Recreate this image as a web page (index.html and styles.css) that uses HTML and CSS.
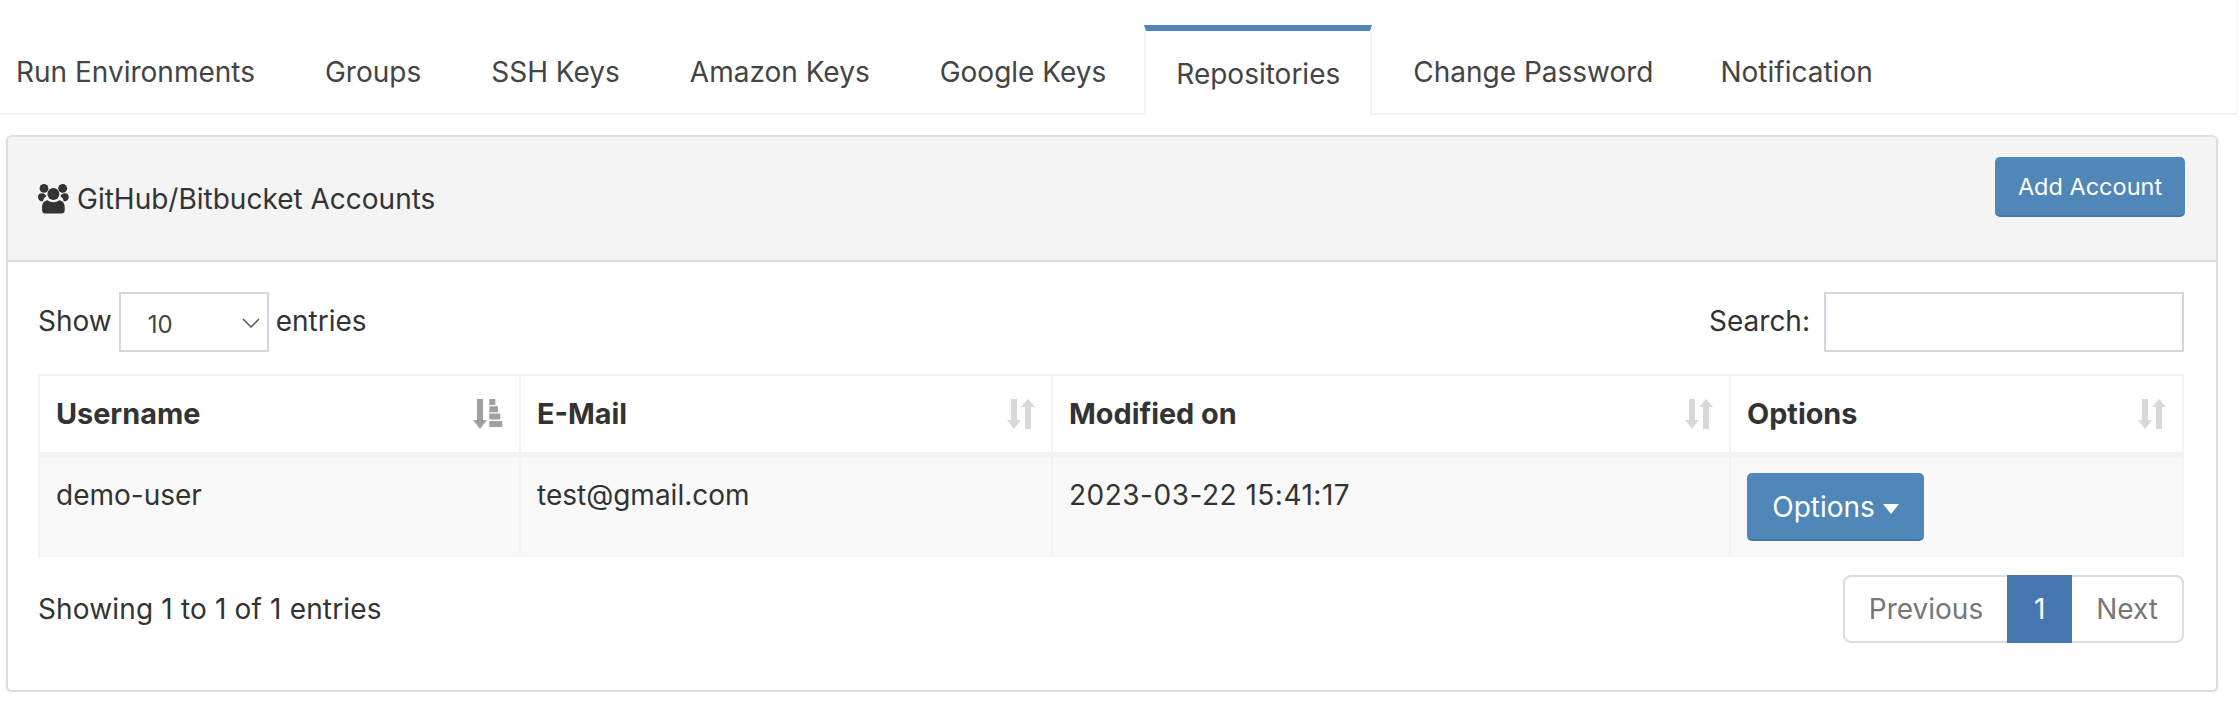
FILE: index.html
```html
<!DOCTYPE html>
<html lang="en">
<head>
    <meta charset="UTF-8">
    <meta name="viewport" content="width=device-width, initial-scale=1.0">
    <title>Repositories</title>
    <link rel="stylesheet" href="styles.css">
</head>
<body>

    <ul class="tabs">
        <li class="tab"><a href="#">Run Environments</a></li>
        <li class="tab"><a href="#">Groups</a></li>
        <li class="tab"><a href="#">SSH Keys</a></li>
        <li class="tab"><a href="#">Amazon Keys</a></li>
        <li class="tab"><a href="#">Google Keys</a></li>
        <li class="tab active"><a href="#">Repositories</a></li>
        <li class="tab"><a href="#">Change Password</a></li>
        <li class="tab"><a href="#">Notification</a></li>
    </ul>

    <div class="panel">
        <div class="panel-heading">
            <h3 class="panel-title">
                <svg class="users-icon" viewBox="0 0 31 30" width="31" height="30">
                    <circle cx="6" cy="4.4" r="4.4"/>
                    <circle cx="24.7" cy="4.4" r="4.4"/>
                    <path d="M3.5 9.2C1.4 9.2 0 10.8 0 13c0 2.2 1.2 3.9 3.3 4.3H5C5.2 15 6.6 13.2 8.3 12.2 7.8 10.3 5.8 9.2 3.5 9.2Z"/>
                    <path d="M27.2 9.2c2.1 0 3.5 1.6 3.5 3.8 0 2.2-1.2 3.9-3.3 4.3h-1.7c-.2-2.300-1.600-4.100-3.300-5.100.5-1.900 2.500-3 4.800-3Z"/>
                    <circle cx="15.400" cy="10" r="6"/>
                    <path d="M9.500 16.200c1.500 1.200 3.600 2 5.900 2s4.400-.8 5.900-2c3 .5 5.400 2.800 5.400 6.800v3.500c0 1.800-1.400 3-3 3H7.100c-1.600 0-3-1.200-3-3V23c0-4 2.400-6.300 5.400-6.800Z"/>
                </svg>
                GitHub/Bitbucket Accounts
            </h3>
            <button class="btn add-btn" type="button">Add Account</button>
        </div>

        <div class="panel-body">
            <div class="table-tools">
                <label class="length-label">
                    Show
                    <span class="select-wrap">
                        <select class="length-select">
                            <option>10</option>
                            <option>25</option>
                            <option>50</option>
                        </select>
                        <svg class="chevron" viewBox="0 0 18 10" width="18" height="10"><path d="M1 1l8 8 8-8" fill="none" stroke="#555" stroke-width="1.500"/></svg>
                    </span>
                    entries
                </label>
                <label class="search-label">
                    Search:
                    <input class="search-input" type="search">
                </label>
            </div>

            <table class="data-table">
                <colgroup>
                    <col class="col-user">
                    <col class="col-mail">
                    <col class="col-date">
                    <col class="col-opts">
                </colgroup>
                <thead>
                    <tr>
                        <th>
                            <div class="th-inner">Username
                                <svg class="sort-icon sorted" viewBox="0 0 30 30" width="30" height="30">
                                    <path d="M4 0h6v21h4L7 30 0 21h4Z"/>
                                    <path d="M16.300 0h6v6h-6ZM16.300 7.300h8.700v6h-8.700ZM16.300 14.600h11v6h-11ZM16.300 22h13v6h-13Z"/>
                                </svg>
                            </div>
                        </th>
                        <th>
                            <div class="th-inner">E-Mail
                                <svg class="sort-icon" viewBox="0 0 28 30" width="28" height="30"><path d="M4 0h6v21h4L7 30 0 21h4ZM18 30V8h-4l7-8 7 8h-4v22Z"/></svg>
                            </div>
                        </th>
                        <th>
                            <div class="th-inner">Modified on
                                <svg class="sort-icon" viewBox="0 0 28 30" width="28" height="30"><path d="M4 0h6v21h4L7 30 0 21h4ZM18 30V8h-4l7-8 7 8h-4v22Z"/></svg>
                            </div>
                        </th>
                        <th>
                            <div class="th-inner">Options
                                <svg class="sort-icon" viewBox="0 0 28 30" width="28" height="30"><path d="M4 0h6v21h4L7 30 0 21h4ZM18 30V8h-4l7-8 7 8h-4v22Z"/></svg>
                            </div>
                        </th>
                    </tr>
                </thead>
                <tbody>
                    <tr>
                        <td>demo-user</td>
                        <td>test@gmail.com</td>
                        <td class="cell-date">2023-03-22 15:41:17</td>
                        <td><button class="btn options-btn" type="button">Options <span class="caret"></span></button></td>
                    </tr>
                </tbody>
            </table>

            <div class="table-footer">
                <div class="table-info">Showing 1 to 1 of 1 entries</div>
                <ul class="pagination">
                    <li class="page-item"><a href="#">Previous</a></li>
                    <li class="page-item current"><a href="#">1</a></li>
                    <li class="page-item"><a href="#">Next</a></li>
                </ul>
            </div>
        </div>
    </div>

</body>
</html>
```

FILE: styles.css
```css
body {
    font-family: Inter, "Liberation Sans", sans-serif;
    font-size: 28px;
    color: #333;
    background: #fff;
    margin: 0;
}

a {
    color: inherit;
    text-decoration: none;
}

/* tabs */
.tabs {
    display: flex;
    list-style: none;
    margin: 0 2px 0 0;
    padding: 25px 0 0;
    height: 88px;
    border-bottom: 2px solid #f4f4f4;
    border-right: 1px solid #f8f8f8;
}

.tab {
    color: #444;
}

.tab a {
    display: block;
    padding: 29px 35px 0;
    line-height: 36px;
}

.tab:first-child a {
    padding-left: 16px;
}

.tab:last-child {
    margin-left: -3px;
}

.tab.active {
    background: #fff;
    border-top: 6px solid #5087b8;
    border-left: 2px solid #f4f4f4;
    border-right: 2px solid #f4f4f4;
    height: 85px;
    margin: 0 6px 0 3px;
}

.tab.active a {
    padding: 25px 30px 0;
}

/* panel */
.panel {
    margin: 20px 22px 0 6px;
    border: 2px solid #ddd;
    border-radius: 6px;
    box-shadow: 0 1px 2px rgba(0, 0, 0, 0.1);
    height: 557px;
    box-sizing: border-box;
}

.panel-heading {
    display: flex;
    justify-content: space-between;
    background: #f4f4f4;
    border-bottom: 2px solid #ddd;
    border-radius: 4px 4px 0 0;
    height: 125px;
    box-sizing: border-box;
    padding: 20px 31px 0 30px;
}

.panel-title {
    display: flex;
    align-items: center;
    gap: 8px;
    margin: 0 0 5px;
    font-size: 28px;
    font-weight: 400;
    height: 84px;
}

.users-icon {
    fill: #333;
    stroke: none;
}

.btn {
    font-family: inherit;
    color: #fff;
    background: #5087b8;
    border: 0;
    border-bottom: 2px solid #4677a3;
    border-radius: 5px;
    cursor: pointer;
}

.add-btn {
    width: 190px;
    height: 60px;
    font-size: 23.500px;
}

.panel-body {
    padding: 30px 32px 0 30px;
}

/* length + search */
.table-tools {
    display: flex;
    justify-content: space-between;
    height: 60px;
    margin-bottom: 22px;
}

.length-label,
.search-label {
    display: flex;
    align-items: center;
    gap: 7px;
    margin-top: -3px;
}

.select-wrap {
    position: relative;
    display: flex;
    margin-top: 3px;
}

.length-select {
    appearance: none;
    width: 150px;
    height: 60px;
    font-family: inherit;
    font-size: 24px;
    color: #444;
    background: #fff;
    border: 2px solid #d2d6de;
    border-radius: 0;
    padding: 4px 0 0 27px;
}

.chevron {
    position: absolute;
    right: 9px;
    top: 26px;
}

.search-label {
    gap: 14px;
}

.search-input {
    width: 360px;
    height: 60px;
    box-sizing: border-box;
    margin-top: 3px;
    border: 2px solid #d2d6de;
    border-radius: 0;
    background: #fff;
    appearance: none;
}

/* table */
.data-table {
    width: 2144px;
    table-layout: fixed;
    border-collapse: collapse;
    border: 2px solid #f4f4f4;
}

.col-user { width: 481px; }
.col-mail { width: 532px; }
.col-date { width: 678px; }
.col-opts { width: 453px; }

.data-table th {
    height: 76px;
    padding: 0 16px 0 16px;
    text-align: left;
    font-size: 28.800px;
    font-weight: 700;
    border: 2px solid #f4f4f4;
    border-bottom-width: 5px;
}

.th-inner {
    display: flex;
    justify-content: space-between;
    align-items: center;
    line-height: 30px;
}

.sort-icon {
    fill: #d8d8d8;
}

.sort-icon.sorted {
    fill: #a0a0a0;
}

.data-table td {
    height: 101px;
    box-sizing: border-box;
    padding: 20px 16px 0;
    vertical-align: top;
    line-height: 36px;
    background: #f9f9f9;
    border: 2px solid #f4f4f4;
}

.data-table .cell-date {
    letter-spacing: 0.5px;
}

.options-btn {
    width: 177px;
    height: 68px;
    padding-top: 3px;
    font-size: 28px;
    margin-top: -4px;
    display: block;
}

.caret {
    display: inline-block;
    width: 0;
    height: 0;
    vertical-align: middle;
    margin-left: 0;
    border-top: 10px solid #fff;
    border-left: 8.500px solid transparent;
    border-right: 8.500px solid transparent;
}

/* footer */
.table-footer {
    display: flex;
    justify-content: space-between;
    margin-top: 18px;
}

.table-info {
    padding-top: 17px;
    letter-spacing: 0.16px;
}

.pagination {
    display: flex;
    list-style: none;
    margin: 0;
    padding: 0;
    height: 68px;
    box-sizing: border-box;
    border: 2px solid #ddd;
    border-radius: 8px;
    color: #777;
}

.page-item a {
    display: block;
    line-height: 64px;
    padding: 0 24px;
}

.page-item.current {
    background: #4777b0;
    color: #fff;
    margin: -2px 0;
}

.page-item.current a {
    line-height: 68px;
    padding: 0;
    width: 65px;
    text-align: center;
}
```
